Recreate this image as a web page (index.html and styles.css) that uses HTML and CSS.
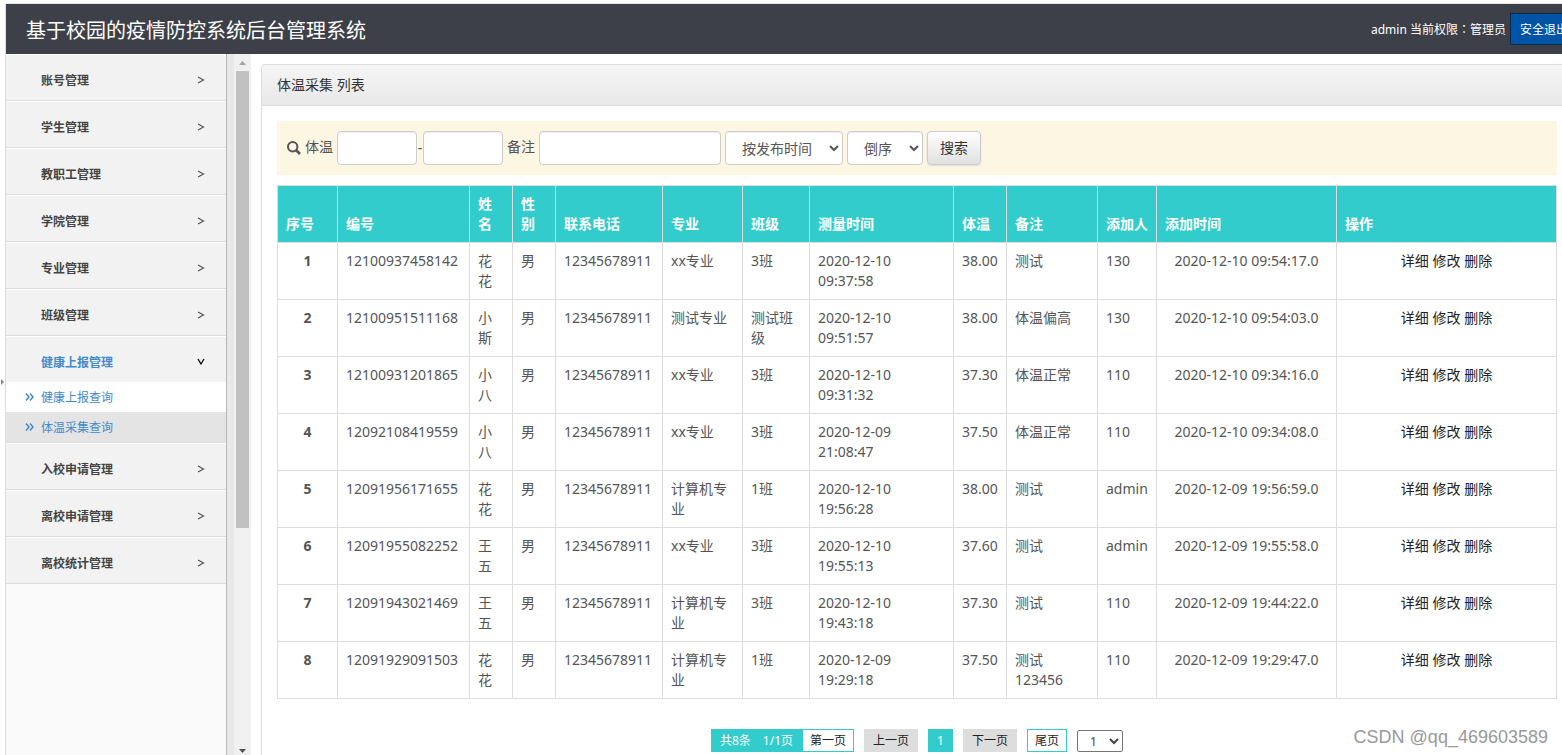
FILE: index.html
```html
<!DOCTYPE html>
<html lang="zh-CN">
<head>
<meta charset="utf-8">
<title>基于校园的疫情防控系统后台管理系统</title>
<link rel="stylesheet" href="styles.css">
</head>
<body>
<svg class="sprite" aria-hidden="true">
  <symbol id="right" viewBox="0 0 8 8"><path d="M1 1 6.500 4 1 7" fill="none" stroke="currentColor" stroke-width="1.2"/></symbol>
  <symbol id="down" viewBox="0 0 8 8"><path d="M1 1 4 6 7 1" fill="none" stroke="currentColor" stroke-width="1.4"/></symbol>
  <symbol id="double" viewBox="0 0 9 8"><path d="M1 .5 4 4 1 7.500M5 .5 8 4 5 7.500" fill="none" stroke="currentColor" stroke-width="1.5"/></symbol>
</svg>
<div class="app">
  <div class="handle"><svg width="4" height="6" viewBox="0 0 4 6"><path d="M1 0 4 3 1 6Z" fill="#888"/></svg></div>
  <div class="shell">
    <header class="topbar">
      <h1 class="brand">基于校园的疫情防控系统后台管理系统</h1>
      <div class="user"><span>admin 当前权限<span class="colon" lang="zh-TW">：</span>管理员</span><button class="logout" type="button">安全退出</button></div>
    </header>
    <div class="main">
      <nav class="sidebar">
        <ul class="menu">
          <li class="item"><a class="head" href="#">账号管理<svg class="chev"><use href="#right"/></svg></a></li>
          <li class="item"><a class="head" href="#">学生管理<svg class="chev"><use href="#right"/></svg></a></li>
          <li class="item"><a class="head" href="#">教职工管理<svg class="chev"><use href="#right"/></svg></a></li>
          <li class="item"><a class="head" href="#">学院管理<svg class="chev"><use href="#right"/></svg></a></li>
          <li class="item"><a class="head" href="#">专业管理<svg class="chev"><use href="#right"/></svg></a></li>
          <li class="item"><a class="head" href="#">班级管理<svg class="chev"><use href="#right"/></svg></a></li>
          <li class="item open"><a class="head" href="#">健康上报管理<svg class="chev"><use href="#down"/></svg></a>
            <ul class="menu">
              <li><a class="sub" href="#"><svg class="dbl"><use href="#double"/></svg>健康上报查询</a></li>
              <li><a class="sub current" href="#"><svg class="dbl"><use href="#double"/></svg>体温采集查询</a></li>
            </ul>
          </li>
          <li class="item"><a class="head" href="#">入校申请管理<svg class="chev"><use href="#right"/></svg></a></li>
          <li class="item"><a class="head" href="#">离校申请管理<svg class="chev"><use href="#right"/></svg></a></li>
          <li class="item"><a class="head" href="#">离校统计管理<svg class="chev"><use href="#right"/></svg></a></li>
        </ul>
      </nav>
      <div class="gutter"></div>
      <div class="scrollbar">
        <svg class="arrow" viewBox="0 0 7 4"><path d="M0 4 3.500 0 7 4Z" fill="#a3a3a3"/></svg>
        <div class="track"><div class="thumb"></div></div>
        <svg class="arrow" viewBox="0 0 7 4"><path d="M0 0 3.500 4 7 0Z" fill="#505050"/></svg>
      </div>
      <main class="content">
        <section class="panel">
          <h2 class="panel-title">体温采集 列表</h2>
          <div class="panel-body">
            <form class="search">
              <svg class="glass" viewBox="0 0 14 14"><circle cx="5.700" cy="5.700" r="4.700" fill="none" stroke="#555" stroke-width="2"/><path d="M9 9 13 13" stroke="#555" stroke-width="2.600"/></svg>
              <label for="t1">体温</label>
              <div class="range"><input class="field temp" id="t1" type="text"><span class="dash">-</span><input class="field temp" type="text" aria-label="体温上限"></div>
              <label for="note">备注</label>
              <input class="field note" id="note" type="text">
              <select class="field by" aria-label="排序字段"><option>按发布时间</option></select>
              <select class="field order" aria-label="排序方向"><option>倒序</option></select>
              <button class="go" type="button">搜索</button>
            </form>
            <table class="grid">
              <colgroup><col class="c60"><col class="c132"><col class="c43"><col class="c43"><col class="c107"><col class="c80"><col class="c67"><col class="c144"><col class="c53"><col class="c91"><col class="c59"><col class="c180"><col></colgroup>
              <thead><tr><th>序号</th><th>编号</th><th>姓名</th><th>性别</th><th>联系电话</th><th>专业</th><th>班级</th><th>测量时间</th><th>体温</th><th>备注</th><th class="keep">添加人</th><th>添加时间</th><th>操作</th></tr></thead>
              <tbody>
                <tr><td class="num">1</td><td>12100937458142</td><td>花花</td><td>男</td><td>12345678911</td><td>xx专业</td><td>3班</td><td>2020-12-10 09:37:58</td><td>38.00</td><td>测试</td><td>130</td><td class="mid">2020-12-10 09:54:17.0</td><td class="mid"><a href="#">详细</a> <a href="#">修改</a> <a href="#">删除</a></td></tr>
                <tr><td class="num">2</td><td>12100951511168</td><td>小斯</td><td>男</td><td>12345678911</td><td>测试专业</td><td>测试班级</td><td>2020-12-10 09:51:57</td><td>38.00</td><td>体温偏高</td><td>130</td><td class="mid">2020-12-10 09:54:03.0</td><td class="mid"><a href="#">详细</a> <a href="#">修改</a> <a href="#">删除</a></td></tr>
                <tr><td class="num">3</td><td>12100931201865</td><td>小八</td><td>男</td><td>12345678911</td><td>xx专业</td><td>3班</td><td>2020-12-10 09:31:32</td><td>37.30</td><td>体温正常</td><td>110</td><td class="mid">2020-12-10 09:34:16.0</td><td class="mid"><a href="#">详细</a> <a href="#">修改</a> <a href="#">删除</a></td></tr>
                <tr><td class="num">4</td><td>12092108419559</td><td>小八</td><td>男</td><td>12345678911</td><td>xx专业</td><td>3班</td><td>2020-12-09 21:08:47</td><td>37.50</td><td>体温正常</td><td>110</td><td class="mid">2020-12-10 09:34:08.0</td><td class="mid"><a href="#">详细</a> <a href="#">修改</a> <a href="#">删除</a></td></tr>
                <tr><td class="num">5</td><td>12091956171655</td><td>花花</td><td>男</td><td>12345678911</td><td>计算机专业</td><td>1班</td><td>2020-12-10 19:56:28</td><td>38.00</td><td>测试</td><td>admin</td><td class="mid">2020-12-09 19:56:59.0</td><td class="mid"><a href="#">详细</a> <a href="#">修改</a> <a href="#">删除</a></td></tr>
                <tr><td class="num">6</td><td>12091955082252</td><td>王五</td><td>男</td><td>12345678911</td><td>xx专业</td><td>3班</td><td>2020-12-10 19:55:13</td><td>37.60</td><td>测试</td><td>admin</td><td class="mid">2020-12-09 19:55:58.0</td><td class="mid"><a href="#">详细</a> <a href="#">修改</a> <a href="#">删除</a></td></tr>
                <tr><td class="num">7</td><td>12091943021469</td><td>王五</td><td>男</td><td>12345678911</td><td>计算机专业</td><td>3班</td><td>2020-12-10 19:43:18</td><td>37.30</td><td>测试</td><td>110</td><td class="mid">2020-12-09 19:44:22.0</td><td class="mid"><a href="#">详细</a> <a href="#">修改</a> <a href="#">删除</a></td></tr>
                <tr><td class="num">8</td><td>12091929091503</td><td>花花</td><td>男</td><td>12345678911</td><td>计算机专业</td><td>1班</td><td>2020-12-09 19:29:18</td><td>37.50</td><td>测试 123456</td><td>110</td><td class="mid">2020-12-09 19:29:47.0</td><td class="mid"><a href="#">详细</a> <a href="#">修改</a> <a href="#">删除</a></td></tr>
              </tbody>
            </table>
            <div class="pager">
              <div class="pair"><span class="total"><span>共8条</span><span>1/1页</span></span><a class="page line first" href="#">第一页</a></div>
              <a class="page" href="#">上一页</a>
              <a class="page on" href="#">1</a>
              <a class="page" href="#">下一页</a>
              <a class="page line last" href="#">尾页</a>
              <select class="jump" aria-label="页码"><option>1</option></select>
            </div>
          </div>
        </section>
      </main>
    </div>
  </div>
</div>
<div class="mark">CSDN @qq_469603589</div>
</body>
</html>
```
FILE: styles.css
```css
* { box-sizing: border-box; }
body {
  margin: 0;
  overflow: hidden;
  background: #fff;
  color: #555;
  font: 14px/20px "Noto Sans", "Noto Sans CJK SC", sans-serif;
}
a { color: #222; text-decoration: none; }
svg { flex: none; }
.sprite { position: absolute; width: 0; height: 0; }

.app { display: flex; min-height: 100vh; padding-top: 3px; }
.handle { display: flex; align-items: center; width: 5px; padding-top: 6px; flex: none; }
.shell {
  display: flex;
  flex-direction: column;
  flex: 1;
  min-width: 0;
  border-top: 1px solid #e5e5e5;
  border-left: 1px solid #ddd;
}

.topbar {
  display: flex;
  justify-content: space-between;
  align-items: center;
  height: 50px;
  padding-left: 20px;
  background: #3d4049;
  color: #fff;
  overflow: hidden;
  white-space: nowrap;
}
.brand { margin: 0; padding-top: 4px; font-size: 20px; font-weight: 400; }
.user { display: flex; align-items: center; gap: 4px; margin-right: -16px; font-size: 12px; }
.user > span { padding-top: 2px; }
.colon { font-family: "Noto Sans CJK TC", sans-serif; line-height: 1; }
.logout {
  height: 32px;
  padding: 2px 9px 0;
  border: 1px solid #0b2a50;
  background: #0054a6;
  color: #fff;
  font: inherit;
}

.main { display: flex; flex: 1; }
.sidebar {
  width: 221px;
  flex: none;
  background: #f9f9f9;
  border-right: 1px solid #b8b8b8;
}
.menu { margin: 0; padding: 0; list-style: none; font-size: 12px; }
.item { border-bottom: 1px solid #ddd; }
.head {
  display: flex;
  align-items: center;
  justify-content: space-between;
  padding: 7px 21px 0 35px;
  border-top: 1px solid #fff;
  background: #f2f2f2;
  color: #444;
  font-weight: 700;
  line-height: 38px;
}
.open .head { color: #428bca; }
.chev { width: 8px; height: 8px; margin-bottom: 2px; color: #555; }
.open .chev { color: #111; }
.sub {
  display: flex;
  align-items: center;
  gap: 7px;
  padding: 2px 0 0 19px;
  background: #fff;
  color: #428bca;
  line-height: 28px;
}
.current { background: #e4e4e4; }
.dbl { width: 9px; height: 8px; margin-bottom: 2px; }

.gutter { width: 7px; flex: none; background: #e8e8e8; }
.scrollbar {
  display: flex;
  flex-direction: column;
  align-items: center;
  width: 17px;
  flex: none;
  padding: 7px 0 2px;
  background: #f0f0f0;
}
.arrow { width: 7px; height: 4px; }
.track { flex: 1; padding: 6px 0; }
.thumb { width: 13px; height: 68%; background: #c1c1c1; }

.content { flex: 1; min-width: 0; padding: 10px 0 0 10px; }
.panel {
  height: 100%;
  border: 1px solid #ddd;
  border-width: 1px 0 0 1px;
  border-radius: 4px 0 0 0;
}
.panel-title {
  margin: 0;
  padding: 10px 15px;
  border-bottom: 1px solid #ddd;
  border-radius: 4px 0 0 0;
  background: linear-gradient(#f5f5f5, #e8e8e8);
  color: #333;
  font-size: 14px;
  font-weight: 400;
}
.panel-body { padding: 15px 5px 0 15px; }

.search {
  display: flex;
  align-items: center;
  gap: 4px;
  margin-bottom: 10px;
  padding: 10px;
  background: #fdf6e3;
}
.search label { padding-bottom: 2px; }
.glass { width: 14px; height: 14px; }
.range { display: flex; align-items: center; }
.dash { width: 6px; text-align: center; }
.field {
  height: 34px;
  border: 1px solid #ccc;
  border-radius: 4px;
  background-color: #fff;
  box-shadow: inset 0 1px 1px #eee;
  color: #555;
  font: inherit;
}
.temp { width: 80px; padding: 6px 12px; }
.note { width: 182px; padding: 6px 12px; }
.by { width: 118px; padding: 0 0 0 12px; }
.order { width: 76px; padding: 0 0 0 12px; }
.go {
  height: 34px;
  padding: 0 12px;
  border: 1px solid #ccc;
  border-radius: 4px;
  background: linear-gradient(#fff, #e0e0e0);
  box-shadow: 0 1px 2px #ddd;
  color: #333;
  font: inherit;
}

.grid { width: 100%; table-layout: fixed; border-collapse: collapse; }
.grid th, .grid td { padding: 8px; border: 1px solid #ddd; text-align: left; vertical-align: top; }
.grid th { background: #3cc; color: #fff; font-weight: 700; vertical-align: bottom; }
.grid .num { font-weight: 700; text-align: center; }
.grid .mid { text-align: center; }
.grid .keep { white-space: nowrap; }
.c43 { width: 43px; }
.c53 { width: 53px; }
.c59 { width: 59px; }
.c60 { width: 60px; }
.c67 { width: 67px; }
.c80 { width: 80px; }
.c91 { width: 91px; }
.c107 { width: 107px; }
.c132 { width: 132px; }
.c144 { width: 144px; }
.c180 { width: 180px; }

.pager {
  display: flex;
  justify-content: center;
  gap: 10px;
  margin-top: 30px;
  font-size: 12px;
}
.pair { display: flex; }
.total {
  display: flex;
  gap: 12px;
  padding: 2px 9px 0;
  background: #3cc;
  color: #fff;
  line-height: 20px;
}
.page {
  padding: 2px 8px 0;
  border: 1px solid #ddd;
  background: #ddd;
  line-height: 18px;
}
.line { border-color: #3cc; background: #fff; }
.first, .last { padding: 2px 7px 0; }
.on { border-color: #3cc; background: #3cc; color: #fff; }
.jump {
  width: 46px;
  height: 22px;
  margin-top: 1px;
  padding-left: 8px;
  border: 1px solid #767676;
  border-radius: 2px;
  background-color: #fff;
  color: #444;
  font: inherit;
}

.mark {
  position: absolute;
  right: 14px;
  bottom: 8px;
  color: #999;
  font-family: "Liberation Sans", sans-serif;
  font-size: 18px;
}
```
